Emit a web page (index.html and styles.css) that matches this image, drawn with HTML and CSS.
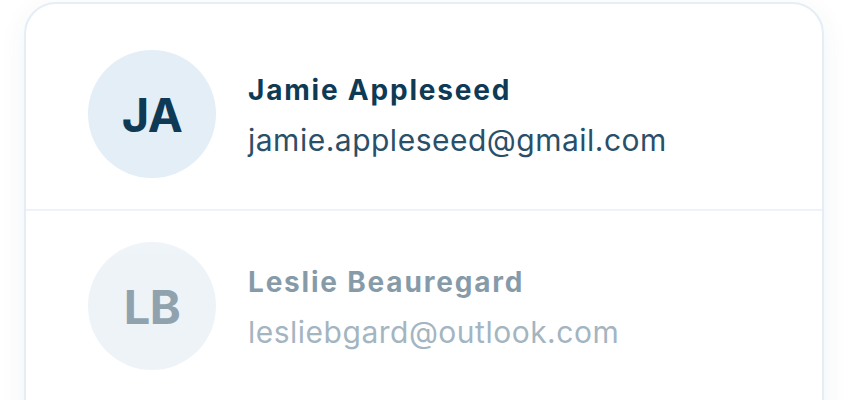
FILE: index.html
```html
<!DOCTYPE html>
<html lang="en">
<head>
<meta charset="utf-8">
<title>Contacts</title>
<link rel="stylesheet" href="styles.css">
</head>
<body>
  <div class="page">
    <div class="card">
      <div class="row">
        <div class="avatar">JA</div>
        <div class="info">
          <div class="name">Jamie Appleseed</div>
          <div class="email">jamie.appleseed@gmail.com</div>
        </div>
      </div>
      <div class="row row-muted">
        <div class="avatar">LB</div>
        <div class="info">
          <div class="name">Leslie Beauregard</div>
          <div class="email">lesliebgard@outlook.com</div>
        </div>
      </div>
    </div>
  </div>
</body>
</html>
```
FILE: styles.css
```css
html, body {
  margin: 0;
  padding: 0;
  background: #ffffff;
  overflow: hidden;
}
body {
  font-family: "Inter", "Noto Sans", sans-serif;
}
.page {
  padding: 2px 24px 0 24px;
}
.card {
  background: #ffffff;
  border: 2px solid #e5eef6;
  border-radius: 32px;
  box-shadow: 0 6px 28px rgba(30, 70, 110, 0.06);
  padding-top: 15px;
  height: 500px;
}
.row {
  display: flex;
  align-items: center;
  gap: 32px;
  padding: 31px 0 31px 62px;
  border-bottom: 2px solid #edf3f9;
}
.row-muted {
  opacity: 0.5;
  border-bottom: none;
}
.avatar {
  width: 128px;
  height: 128px;
  border-radius: 50%;
  background: #e4eef6;
  color: #0e3a56;
  font-size: 47px;
  font-weight: 700;
  letter-spacing: -0.5px;
  display: flex;
  align-items: center;
  justify-content: center;
  flex-shrink: 0;
}
.row-muted .avatar {
  background: #dfe9f3;
  color: #23485f;
}
.info {
  display: flex;
  flex-direction: column;
  gap: 16px;
  padding-top: 4px;
}
.name {
  font-size: 28px;
  font-weight: 700;
  letter-spacing: 1.8px;
  color: #0e3a56;
  line-height: 32px;
}
.email {
  font-size: 30px;
  font-weight: 400;
  letter-spacing: 0.5px;
  color: #2a4f68;
  line-height: 36px;
}
.row-muted .name {
  color: #0e3a56;
}
.row-muted .email {
  color: #4a6d84;
}
```
